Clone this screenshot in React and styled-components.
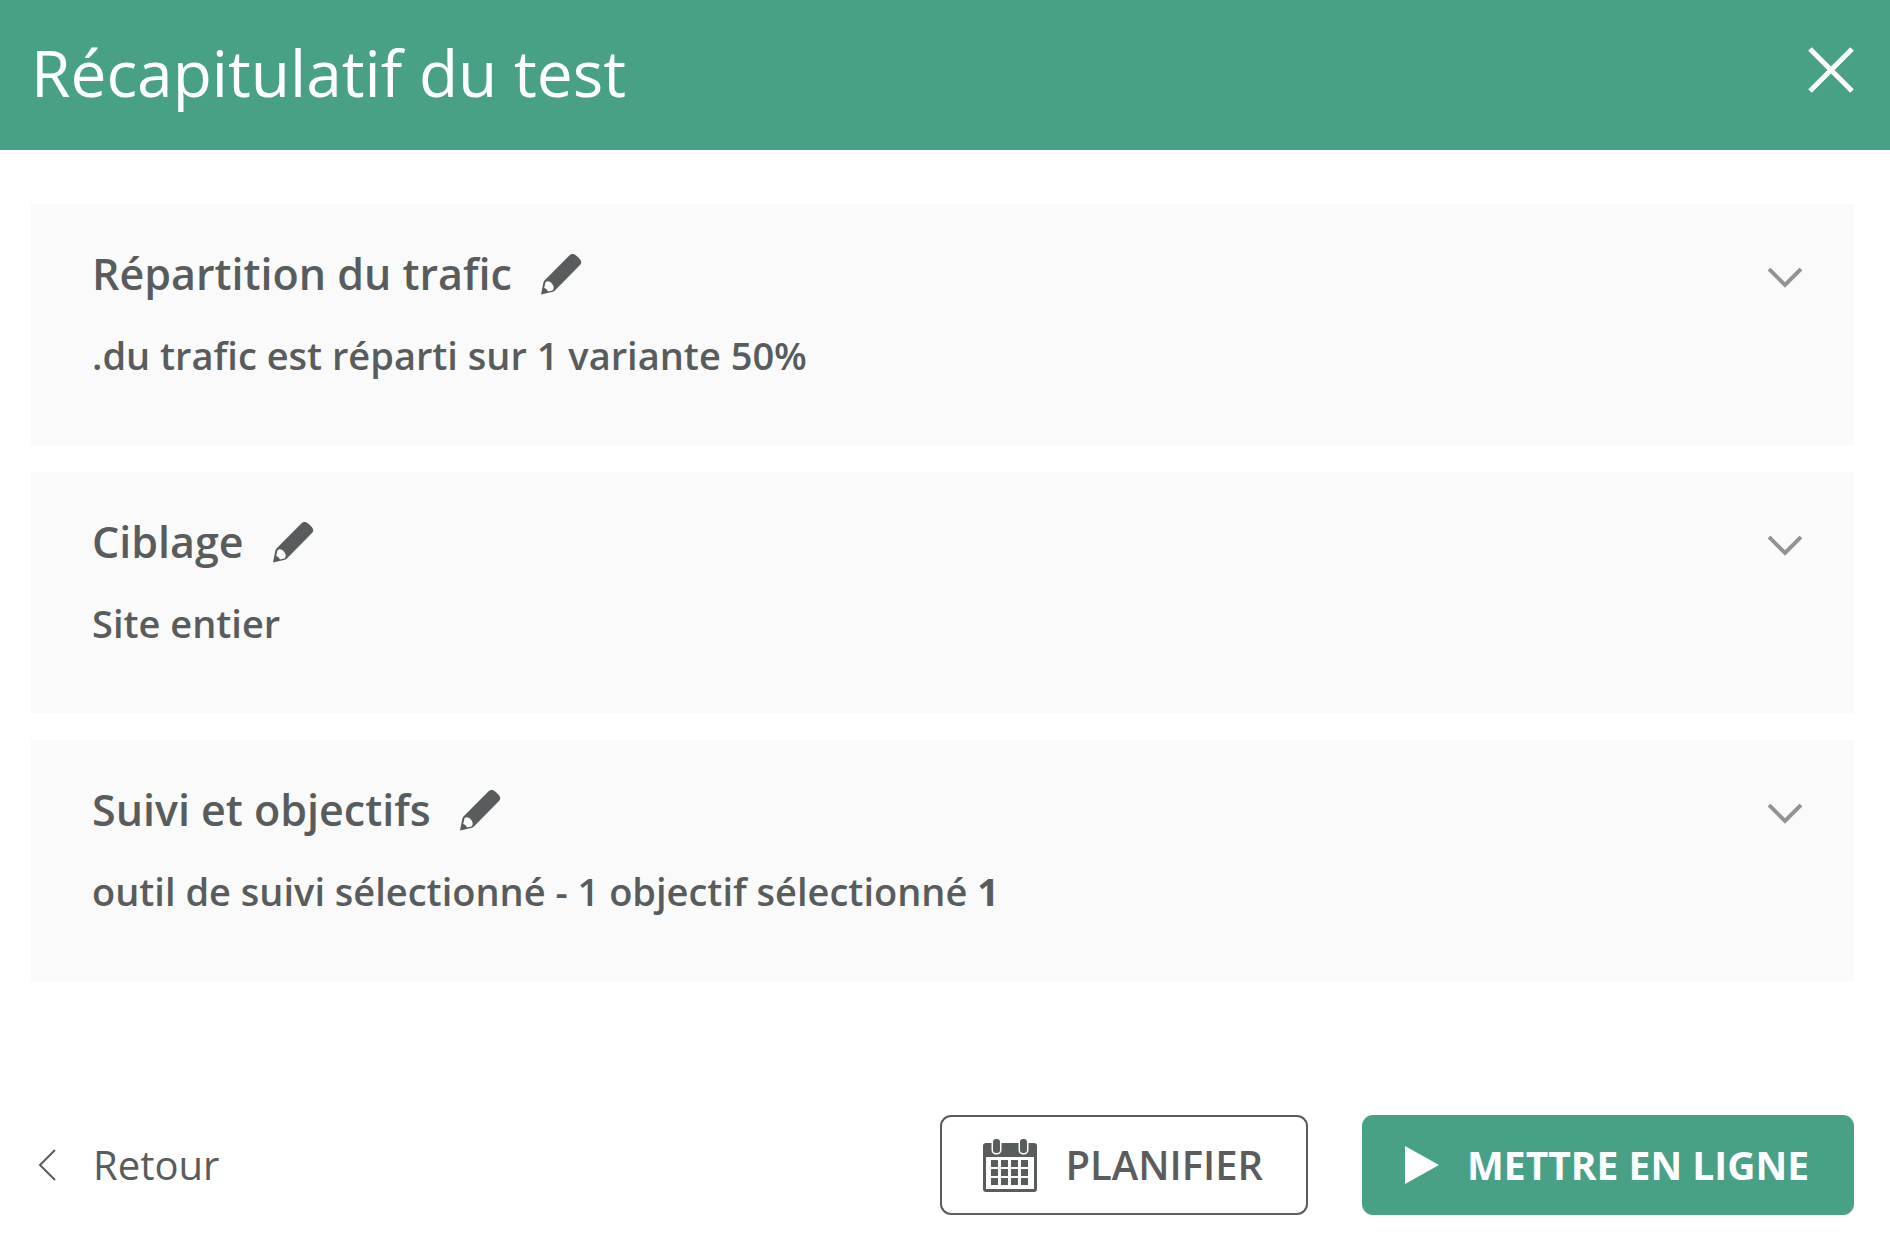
import React, { useState } from "react";
import styled, { createGlobalStyle } from "styled-components";

const sections = [
  {
    id: "traffic",
    title: "Répartition du trafic",
    text: ".du trafic est réparti sur 1 variante 50%",
  },
  { id: "targeting", title: "Ciblage", text: "Site entier" },
  {
    id: "goals",
    title: "Suivi et objectifs",
    text: "outil de suivi sélectionné - 1 objectif sélectionné",
    count: 1,
  },
];

const CloseIcon = () => (
  <svg width="46" height="46" viewBox="0 0 46 46" aria-hidden="true">
    <path d="M2 2 44 44M44 2 2 44" stroke="currentColor" strokeWidth="5" />
  </svg>
);

const PencilIcon = () => (
  <svg width="42" height="42" viewBox="0 0 42 42" aria-hidden="true">
    <path
      fill="currentColor"
      fillRule="evenodd"
      d="M29.600 2.200C31 .8 33 .6 34.600 1.400C37.200 2.800 39.400 5 40.800 7.600C41.600 9.200 41.400 10.600 40.200 11.800L15.400 37C14.400 38 13.600 38.600 12 39L1 41.400L3.400 29.600C3.700 28.400 4.200 27.800 5 27ZM5.400 29.400L4.200 35C6 35.600 7.200 36.800 8 38.600L12.400 37.600C14.600 35.600 13.800 32.400 11.600 30.200C9.600 28.200 7.200 27.600 5.400 29.400Z"
    />
  </svg>
);

const ChevronIcon = () => (
  <svg width="34" height="20" viewBox="0 0 34 20" aria-hidden="true">
    <path
      d="M1 1 17 17 33 1"
      fill="none"
      stroke="currentColor"
      strokeWidth="4"
    />
  </svg>
);

const BackIcon = () => (
  <svg width="18" height="32" viewBox="0 0 18 32" aria-hidden="true">
    <path
      d="M17 1 2 16 17 31"
      fill="none"
      stroke="currentColor"
      strokeWidth="2"
    />
  </svg>
);

const CalendarIcon = () => (
  <svg width="54" height="56" viewBox="0 -2 54 56" aria-hidden="true">
    <g fill="#585c5c">
      <path
        fillRule="evenodd"
        d="M3 4H51Q54 4 54 7V50Q54 53 51 53H3Q0 53 0 50V7Q0 4 3 4ZM3 18V50H51V18Z"
      />
      <g stroke="#fff" strokeWidth="3" paintOrder="stroke">
        <rect x="10" y="0" width="7" height="14" rx="3" />
        <rect x="37" y="0" width="7" height="14" rx="3" />
      </g>
      {[21, 30, 39].map((y) =>
        [8, 18, 28, 38].map((x) => (
          <rect key={`${x}-${y}`} x={x} y={y} width="7" height="7" />
        ))
      )}
    </g>
  </svg>
);

const PlayIcon = () => (
  <svg width="34" height="38" viewBox="0 0 34 38" aria-hidden="true">
    <path d="M0 0 34 19 0 38Z" fill="currentColor" />
  </svg>
);

const App = () => {
  const [opened, setOpened] = useState(null);

  return (
    <>
      <GlobalStyle />
      <StyledHeader>
        <h1>Récapitulatif du test</h1>
        <IconButton type="button" aria-label="Fermer">
          <CloseIcon />
        </IconButton>
      </StyledHeader>
      <StyledMain>
        <SectionList>
          {sections.map(({ id, title, text, count }) => (
            <Section key={id}>
              <SectionHead>
                <h2>{title}</h2>
                <IconButton type="button" aria-label={`Modifier : ${title}`}>
                  <PencilIcon />
                </IconButton>
                <ToggleButton
                  type="button"
                  aria-label={`Détails : ${title}`}
                  aria-expanded={opened === id}
                  $open={opened === id}
                  onClick={() => setOpened(opened === id ? null : id)}
                >
                  <ChevronIcon />
                </ToggleButton>
              </SectionHead>
              <p>
                {text}
                {count && <strong> {count}</strong>}
              </p>
            </Section>
          ))}
        </SectionList>
        <StyledFooter>
          <BackButton type="button">
            <BackIcon />
            Retour
          </BackButton>
          <Actions>
            <ActionButton type="button">
              <CalendarIcon />
              PLANIFIER
            </ActionButton>
            <ActionButton type="button" $primary>
              <PlayIcon />
              METTRE EN LIGNE
            </ActionButton>
          </Actions>
        </StyledFooter>
      </StyledMain>
    </>
  );
};

const GlobalStyle = createGlobalStyle`
  * {
    box-sizing: border-box;
  }

  body {
    margin: 0;
    background: #fff;
    color: #585c5c;
    font-family: "Open Sans", "Noto Sans", sans-serif;
  }

  h1, h2, p {
    margin: 0;
  }

  button {
    padding: 0;
    border: 0;
    background: none;
    color: inherit;
    font-family: inherit;
    cursor: pointer;
  }

  svg {
    display: block;
    flex-shrink: 0;
  }
`;

const StyledHeader = styled.header`
  display: flex;
  align-items: center;
  justify-content: space-between;
  padding: 22px 36px 32px 31px;
  background: #48a187;
  color: #fff;

  h1 {
    padding-top: 6px;
    font-size: 64px;
    font-weight: 400;
    line-height: 90px;
  }
`;

const IconButton = styled.button`
  display: flex;
`;

const ToggleButton = styled(IconButton)`
  margin-left: auto;
  padding-top: 8px;
  color: #929494;

  svg {
    transform: ${({ $open }) => ($open ? "rotate(180deg)" : "none")};
  }
`;

const StyledMain = styled.main`
  padding: 54px 36px 45px 31px;
`;

const SectionList = styled.div`
  display: flex;
  flex-direction: column;
  gap: 27px;
`;

const Section = styled.section`
  padding: 40px 52px 64px 61px;
  background: #fafafa;

  p {
    margin-top: 25px;
    font-size: 38px;
    font-weight: 600;
    line-height: 52px;
  }

  strong {
    font-weight: 700;
  }
`;

const SectionHead = styled.div`
  display: flex;
  align-items: center;
  gap: 28px;

  h2 {
    font-size: 43px;
    font-weight: 600;
    line-height: 60px;
  }
`;

const StyledFooter = styled.footer`
  display: flex;
  align-items: center;
  justify-content: space-between;
  margin-top: 134px;
`;

const BackButton = styled.button`
  display: flex;
  align-items: center;
  gap: 37px;
  padding-left: 7px;
  font-size: 40px;
  line-height: 54px;
`;

const Actions = styled.div`
  display: flex;
  gap: 54px;
`;

const ActionButton = styled.button`
  display: flex;
  align-items: center;
  gap: 28px;
  padding: 20px 43px 20px 41px;
  border: 2px solid ${({ $primary }) => ($primary ? "#48a187" : "#585c5c")};
  border-radius: 11px;
  background: ${({ $primary }) => ($primary ? "#48a187" : "#fff")};
  color: ${({ $primary }) => ($primary ? "#fff" : "#5c5c5c")};
  font-size: ${({ $primary }) => ($primary ? "39px" : "40px")};
  font-weight: ${({ $primary }) => ($primary ? 700 : 600)};
  line-height: 54px;
`;

export default App;
